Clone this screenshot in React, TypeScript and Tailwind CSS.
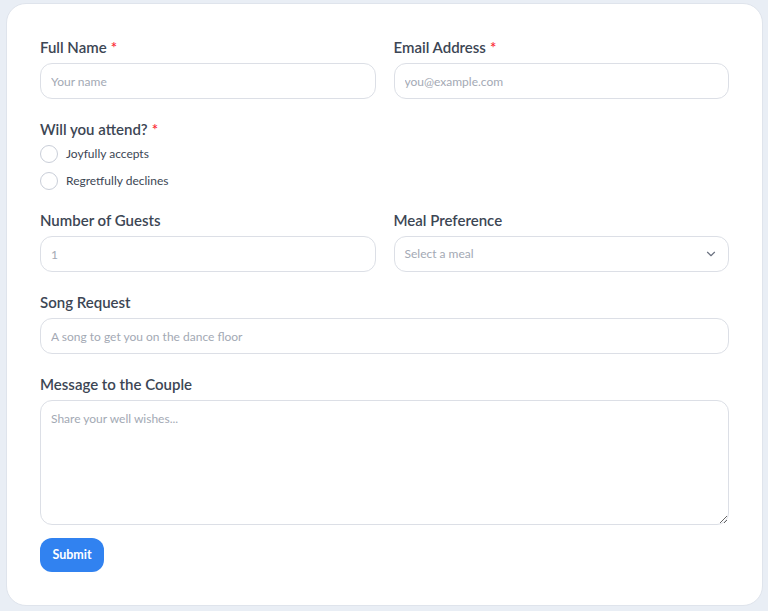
import React from "react";
import { ChevronDown } from "lucide-react";

const Label: React.FC<{ text: string; required?: boolean }> = ({ text, required }) => (
  <label className="block text-[15px] leading-5 font-semibold text-[#3c4654] mb-1.5">
    {text}
    {required && <span className="text-red-500 ml-1">*</span>}
  </label>
);

const inputCls =
  "block w-full h-[36px] rounded-xl border border-[#dcdfe6] bg-white px-[10px] text-[12px] text-gray-700 placeholder:text-[#a3a9b4] outline-none";

export default function App() {
  return (
    <div
      className="min-h-[611px] bg-[#e9eef5] pt-[3px] pl-[6px] pr-[5px] pb-[6px]"
      style={{ fontFamily: 'Lato, "Noto Sans", sans-serif' }}
    >
      <form className="rounded-[20px] border border-[#dfe4ec] bg-white px-[33px] pt-[33px] pb-[33px]">
        <div className="grid grid-cols-2 gap-x-[18px]">
          <div>
            <Label text="Full Name" required />
            <input className={inputCls} placeholder="Your name" />
          </div>
          <div>
            <Label text="Email Address" required />
            <input className={inputCls} placeholder="you@example.com" />
          </div>
        </div>

        <div className="mt-5">
          <label className="block text-[15px] leading-5 font-semibold text-[#3c4654]">
            Will you attend?<span className="text-red-500 ml-1">*</span>
          </label>
          <div className="flex flex-col gap-[9px] mt-[6px]">
            {["Joyfully accepts", "Regretfully declines"].map((opt) => (
              <label key={opt} className="flex items-center gap-2 h-[18px] text-[12px] text-[#3c4654]">
                <span className="w-[18px] h-[18px] rounded-full border-[1.5px] border-[#c9ced8] bg-white" />
                {opt}
              </label>
            ))}
          </div>
        </div>

        <div className="grid grid-cols-2 gap-x-[18px] mt-5">
          <div>
            <Label text="Number of Guests" />
            <input className={inputCls} placeholder="1" />
          </div>
          <div>
            <Label text="Meal Preference" />
            <div className="flex items-center justify-between h-[36px] rounded-xl border border-[#dcdfe6] bg-white px-[10px] text-[12px] text-[#a3a9b4]">
              <span>Select a meal</span>
              <ChevronDown className="w-[14px] h-[14px] text-[#6b7280]" strokeWidth={2} />
            </div>
          </div>
        </div>

        <div className="mt-5">
          <Label text="Song Request" />
          <input className={inputCls} placeholder="A song to get you on the dance floor" />
        </div>

        <div className="mt-5">
          <Label text="Message to the Couple" />
          <textarea
            className="block w-full h-[125px] rounded-xl border border-[#dcdfe6] bg-white px-[10px] py-[9px] text-[12px] text-gray-700 placeholder:text-[#a3a9b4] outline-none"
            placeholder="Share your well wishes..."
          />
        </div>

        <button
          type="button"
          className="mt-[13px] h-[34px] w-[64px] rounded-xl bg-[#3182f0] text-white text-[12.5px] font-bold"
        >
          Submit
        </button>
      </form>
    </div>
  );
}
